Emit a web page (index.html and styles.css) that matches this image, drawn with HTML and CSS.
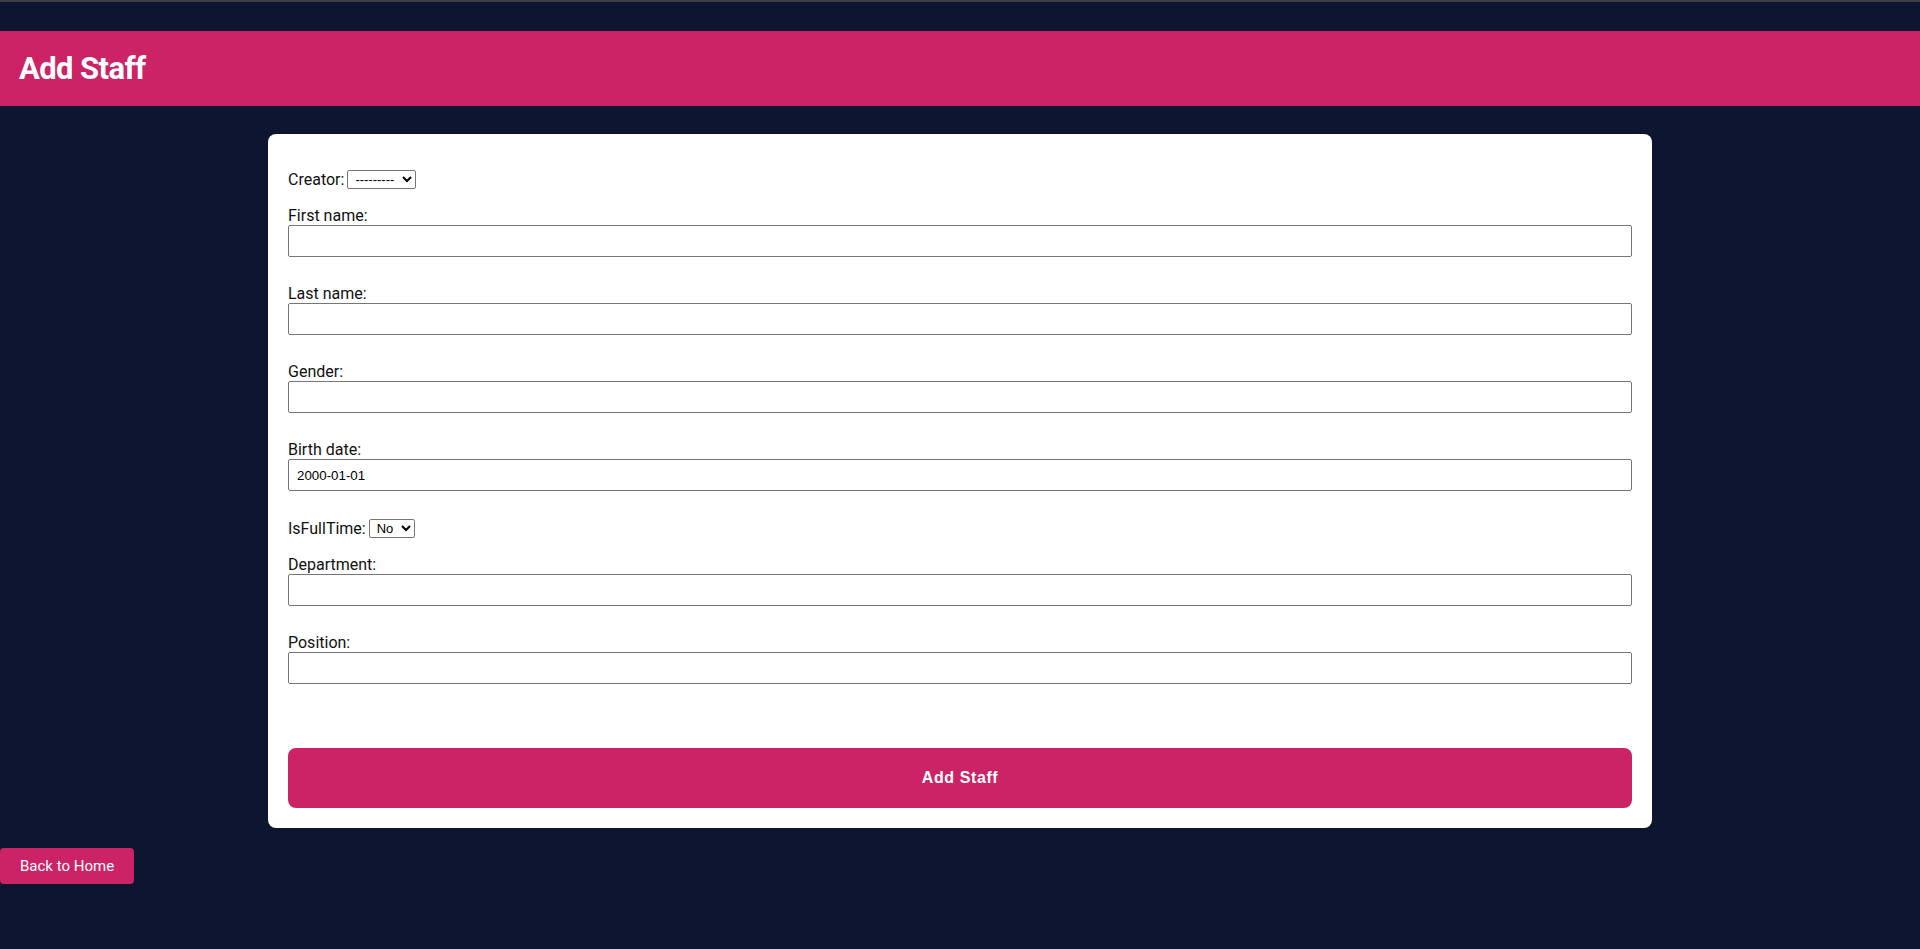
FILE: index.html
```html
<!DOCTYPE html>
<html lang="en">
<head>
<meta charset="utf-8">
<title>Add Staff</title>
<link rel="stylesheet" href="styles.css">
</head>
<body>
<div class="topline"></div>
<header class="page-header">
  <h1 class="page-title">Add Staff</h1>
</header>
<main class="card">
  <form class="staff-form">
    <div class="inline-row">
      <label class="lbl" for="creator">Creator:</label>
      <select id="creator" class="sel sel-creator"><option>---------</option></select>
    </div>
    <div class="field">
      <label class="lbl" for="first">First name:</label>
      <input id="first" class="txt" type="text">
    </div>
    <div class="field">
      <label class="lbl" for="last">Last name:</label>
      <input id="last" class="txt" type="text">
    </div>
    <div class="field">
      <label class="lbl" for="gender">Gender:</label>
      <input id="gender" class="txt" type="text">
    </div>
    <div class="field">
      <label class="lbl" for="birth">Birth date:</label>
      <input id="birth" class="txt" type="text" value="2000-01-01">
    </div>
    <div class="inline-row">
      <label class="lbl" for="full">IsFullTime:</label>
      <select id="full" class="sel sel-full"><option>No</option><option>Yes</option></select>
    </div>
    <div class="field">
      <label class="lbl" for="dept">Department:</label>
      <input id="dept" class="txt" type="text">
    </div>
    <div class="field">
      <label class="lbl" for="pos">Position:</label>
      <input id="pos" class="txt" type="text">
    </div>
    <button type="button" class="submit-btn">Add Staff</button>
  </form>
</main>
<a class="back-btn" href="#">Back to Home</a>
</body>
</html>
```
FILE: styles.css
```css
html, body {
  margin: 0;
  padding: 0;
}
body {
  background: #0d1530;
  font-family: Roboto, "Liberation Sans", Arial, sans-serif;
  color: #111;
  min-height: 949px;
}
.topline {
  height: 2px;
  background: #3c3f46;
}
.page-header {
  margin-top: 29px;
  height: 75px;
  background: #cc2366;
  display: flex;
  align-items: center;
  padding-left: 19px;
}
.page-title {
  margin: 0;
  color: #fff;
  font-size: 31px;
  font-weight: 700;
  letter-spacing: -0.6px;
}
.card {
  width: 70%;
  margin: 28px auto 0;
  padding: 20px;
  background: #fff;
  border-radius: 8px;
}
.staff-form {
  display: flex;
  flex-direction: column;
  gap: 17px;
  padding-top: 15px;
}
.inline-row {
  display: flex;
  align-items: center;
  height: 20px;
  gap: 3px;
}
.lbl {
  font-size: 16px;
  line-height: 19px;
  color: #111;
}
.field {
  display: flex;
  flex-direction: column;
  padding-bottom: 10px;
}
.txt {
  box-sizing: border-box;
  width: 100%;
  height: 32px;
  margin: 0;
  padding: 0 8px;
  border: 1px solid #767676;
  border-radius: 2px;
  font-family: "Liberation Sans", Arial, sans-serif;
  font-size: 13.33px;
  color: #000;
  background: #fff;
}
.sel {
  box-sizing: border-box;
  height: 19px;
  font-family: "Liberation Sans", Arial, sans-serif;
  font-size: 13px;
  border: 1px solid #767676;
  border-radius: 2px;
  background: #fff;
  color: #000;
  padding: 0 0 0 3px;
}
.sel-creator {
  width: 69px;
}
.sel-full {
  width: 46px;
}
.submit-btn {
  margin-top: 37px;
  height: 60px;
  width: 100%;
  border: none;
  border-radius: 8px;
  background: #cc2366;
  color: #fff;
  font-family: "Liberation Sans", Arial, sans-serif;
  font-weight: 700;
  font-size: 16px;
  letter-spacing: 0.6px;
  cursor: pointer;
}
.back-btn {
  display: inline-block;
  margin-top: 20px;
  padding: 9px 20px;
  background: #cc2366;
  color: #fff;
  text-decoration: none;
  font-size: 15px;
  line-height: 18px;
  border-radius: 4px;
}
```
